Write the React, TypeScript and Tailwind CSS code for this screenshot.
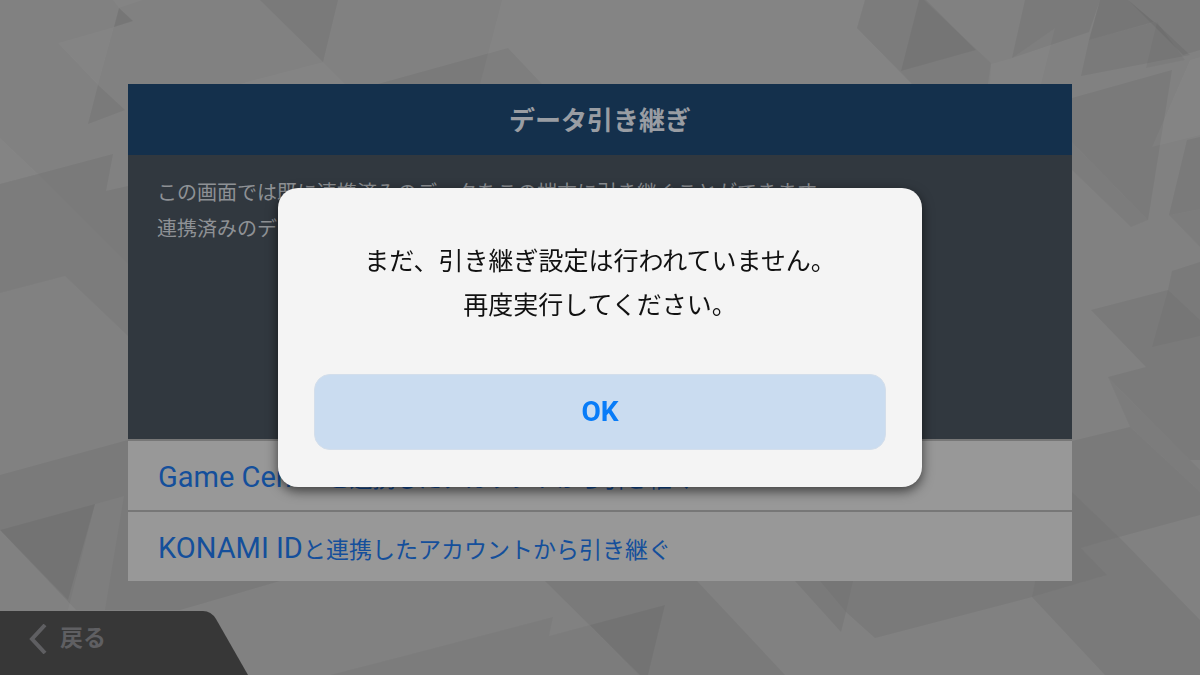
import { useState } from "react";

type Tone = "light" | "faint" | "dark" | "deep";

const shards: { points: string; tone: Tone }[] = [
  // top left
  { points: "113,0 119,8 143,0", tone: "light" },
  { points: "119,8 133,21 114,27", tone: "deep" },
  { points: "58,43 114,27 98,85", tone: "light" },
  { points: "98,85 125,110 88,124", tone: "dark" },
  { points: "0,138 38,174 0,184", tone: "light" },
  { points: "38,174 113,154 106,191 128,186 128,264", tone: "dark" },
  { points: "0,184 38,174 128,264 128,336 65,276 0,293", tone: "faint" },
  // top middle
  { points: "260,0 338,0 323,62", tone: "dark" },
  { points: "250,81 323,62 345,84 240,84", tone: "light" },
  { points: "378,84 508,48 542,84", tone: "dark" },
  { points: "502,0 865,0 857,28 912,84 480,84", tone: "light" },
  // top right
  { points: "865,0 924,0 991,63 988,84 912,84 857,28", tone: "faint" },
  { points: "919,0 926,0 976,50 901,71", tone: "dark" },
  { points: "1025,0 1100,0 1089,32 1012,58", tone: "dark" },
  { points: "1012,58 1055,28 1041,84 990,84 991,64", tone: "light" },
  { points: "1100,0 1128,0 1154,22 1089,40", tone: "deep" },
  { points: "1089,40 1155,22 1190,55 1081,76", tone: "dark" },
  { points: "1128,0 1200,0 1200,50 1183,55", tone: "dark" },
  { points: "1157,22 1185,60 1146,68", tone: "faint" },
  { points: "1072,98 1172,70 1148,220 1072,142", tone: "dark" },
  { points: "1072,142 1148,220 1131,227 1072,170", tone: "faint" },
  { points: "1190,60 1200,57 1200,135 1152,147", tone: "light" },
  { points: "1187,140 1200,137 1200,209 1169,215", tone: "dark" },
  { points: "1169,215 1200,209 1200,247", tone: "faint" },
  // right
  { points: "1172,271 1200,262 1200,320 1168,290", tone: "dark" },
  { points: "1091,310 1168,290 1200,320 1200,460 1190,460 1108,377 1146,367", tone: "dark" },
  { points: "1168,290 1200,320 1200,336 1152,347", tone: "faint" },
  { points: "1072,441 1130,427 1200,492 1200,515 1119,537 1072,492", tone: "dark" },
  { points: "1130,427 1108,377 1200,470 1200,492", tone: "faint" },
  { points: "1072,492 1119,537 1081,548 1107,575 1032,597 1035,581 1072,581", tone: "deep" },
  { points: "1032,597 1107,575 1081,548 1119,537 1200,620 1200,675 1105,675", tone: "dark" },
  // bottom
  { points: "800,581 1035,581 1032,597 875,638 846,612 841,632 795,581", tone: "dark" },
  { points: "820,581 853,581 846,612", tone: "faint" },
  { points: "545,581 697,581 785,675 640,675", tone: "dark" },
  { points: "590,625 665,605 648,675 638,675", tone: "dark" },
  { points: "330,675 400,657 553,617 549,636 590,625 638,675", tone: "faint" },
  // bottom left
  { points: "0,475 128,440 128,581 280,581 180,610 76,610 0,530", tone: "dark" },
  { points: "0,530 95,504 68,600", tone: "dark" },
  { points: "95,504 124,496 105,610 68,610", tone: "light" },
];

const tones: Record<Tone, string> = {
  light: "fill-white/3",
  faint: "fill-black/3",
  dark: "fill-black/5",
  deep: "fill-black/8",
};

function Backdrop() {
  return (
    <svg
      className="absolute inset-0 h-full w-full"
      viewBox="0 0 1200 675"
      preserveAspectRatio="xMidYMid slice"
      aria-hidden="true"
    >
      {shards.map((shard) => (
        <polygon key={shard.points} points={shard.points} className={tones[shard.tone]} />
      ))}
    </svg>
  );
}

function AccountLink({ service }: { service: string }) {
  return (
    <a
      href="#"
      className="flex h-[71px] items-center border-t-2 border-[#777777] bg-[#989898] px-[30px] pt-1 text-[23px] text-[#144f9b]"
    >
      <span>
        <span className="text-[29px]">{service}</span>
        と連携したアカウントから引き継ぐ
      </span>
    </a>
  );
}

function Dialog({ onClose }: { onClose: () => void }) {
  return (
    <div className="fixed inset-0 flex items-center justify-center p-4">
      <div
        role="alertdialog"
        aria-labelledby="dialog-message"
        className="w-full max-w-[644px] rounded-[20px] bg-[#f4f4f4] px-9 pt-[52px] pb-[37px] shadow-[0_4px_12px_rgba(0,0,0,0.6)]"
      >
        <p id="dialog-message" className="text-center text-[25px] leading-[44px] text-[#111111]">
          まだ、引き継ぎ設定は行われていません。
          <br />
          再度実行してください。
        </p>
        <button
          type="button"
          onClick={onClose}
          className="mt-[46px] h-[76px] w-full rounded-2xl border border-[#d3deeb] bg-[#cadcf0] text-[28px] font-bold text-[#087cf8]"
        >
          OK
        </button>
      </div>
    </div>
  );
}

export default function App() {
  const [open, setOpen] = useState(true);

  return (
    <div className="relative flex min-h-screen flex-col bg-[#818181] font-[Roboto,'Noto_Sans_CJK_JP',sans-serif]">
      <Backdrop />

      <main className="relative px-4 pt-[84px] md:px-32">
        <h1 className="flex h-[71px] items-center justify-center bg-[#14304c] pt-1 text-[26px] font-bold text-[#999da3]">
          データ引き継ぎ
        </h1>
        <div className="min-h-[284px] bg-[#31383f] px-[29px] py-5 text-[20px] leading-[36px] text-[#8e9195]">
          <p>この画面では既に連携済みのデータをこの端末に引き継ぐことができます。</p>
          <p>連携済みのデータ</p>
        </div>
        <nav>
          <AccountLink service="Game Center" />
          <AccountLink service="KONAMI ID" />
        </nav>
      </main>

      <footer className="relative mt-auto">
        <button
          type="button"
          className="relative flex h-16 w-[248px] items-center gap-3 pb-2 pl-7 text-[23px] font-bold text-[#5f5f62]"
        >
          <svg className="absolute inset-0 h-full w-full" viewBox="0 0 248 64" aria-hidden="true">
            <path d="M0 0H203Q211 0 216 8L248 64H0Z" fill="#373737" />
          </svg>
          <svg className="relative h-[30px] w-5" viewBox="0 0 20 30" fill="none" aria-hidden="true">
            <path d="M17 1L4 15L17 29" stroke="currentColor" strokeWidth="4" />
          </svg>
          <span className="relative">戻る</span>
        </button>
      </footer>

      {open && <Dialog onClose={() => setOpen(false)} />}
    </div>
  );
}
